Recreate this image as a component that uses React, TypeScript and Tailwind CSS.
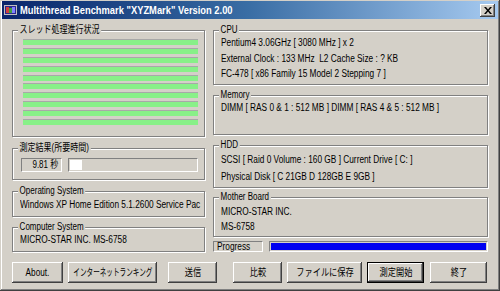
import React from "react";

const FONT = { fontFamily: '"Liberation Sans", "Noto Sans CJK JP", sans-serif' };

function T({ children, className = "" }: { children: React.ReactNode; className?: string }) {
  return (
    <span className={`inline-block origin-left scale-x-[0.83] whitespace-nowrap ${className}`}>
      {children}
    </span>
  );
}

function Group({
  label,
  className,
  children,
}: {
  label: string;
  className: string;
  children?: React.ReactNode;
}) {
  return (
    <div
      className={`relative border border-[#808080] shadow-[inset_1px_1px_0_#ffffff,1px_1px_0_#ffffff] ${className}`}
    >
      <span className="absolute -top-[7px] left-[5px] origin-left scale-x-[0.8] px-[2px] bg-[#d4d0c8] text-[10px] leading-[12px] whitespace-nowrap">
        {label}
      </span>
      {children}
    </div>
  );
}

function Btn({
  label,
  className,
  def,
  narrow,
}: {
  label: string;
  className: string;
  def?: boolean;
  narrow?: boolean;
}) {
  return (
    <div
      className={`h-[21px] flex items-center justify-center text-[10px] ${
        def
          ? "border border-black shadow-[inset_-1px_-1px_0_#404040,inset_1px_1px_0_#ffffff,inset_-2px_-2px_0_#808080]"
          : "shadow-[inset_-1px_-1px_0_#404040,inset_1px_1px_0_#ffffff,inset_-2px_-2px_0_#808080]"
      } ${className}`}
    >
      <span
        className={`inline-block whitespace-nowrap ${narrow ? "scale-x-[0.66]" : "scale-x-[0.82]"}`}
      >
        {label}
      </span>
    </div>
  );
}

export default function App() {
  const bars = Array.from({ length: 10 });
  return (
    <div
      className="w-[500px] h-[291px] bg-[#d4d0c8] text-black overflow-hidden flex flex-col shadow-[inset_-1px_-1px_0_#404040,inset_1px_1px_0_#d4d0c8,inset_-2px_-2px_0_#808080,inset_2px_2px_0_#ffffff]"
      style={FONT}
    >
      {/* Title bar */}
      <div className="h-[18px] mx-[2px] mt-[1px] bg-gradient-to-r from-[#0a246a] via-[#3a6ea5] to-[#a6caf0] flex items-center">
        <svg width="13" height="10" viewBox="0 0 13 10" className="ml-[2px] mr-[3px]">
          <rect x="0" y="0" width="13" height="10" fill="#c0c0c0" />
          <rect x="1" y="1" width="11" height="8" fill="#2a2a8a" />
          <rect x="2" y="2" width="3" height="6" fill="#d04040" />
          <rect x="5" y="3" width="3" height="5" fill="#40a040" />
          <rect x="8" y="2" width="3" height="6" fill="#8080ff" />
        </svg>
        <span className="text-white font-bold text-[11px] inline-block origin-left scale-x-[0.85] whitespace-nowrap">
          Multithread Benchmark "XYZMark" Version 2.00
        </span>
        <div className="ml-auto mr-[3px] w-[15px] h-[13px] bg-[#d4d0c8] shadow-[inset_-1px_-1px_0_#404040,inset_1px_1px_0_#ffffff,inset_-2px_-2px_0_#808080] flex items-center justify-center">
          <svg width="8" height="7" viewBox="0 0 8 7">
            <path d="M0 0h2l2 2.5L6 0h2L5 3.5 8 7H6L4 4.5 2 7H0l3-3.5z" fill="#000" />
          </svg>
        </div>
      </div>

      {/* Main */}
      <div className="flex px-[12px] pt-[11px] gap-[8px]">
        {/* Left column */}
        <div className="w-[193px] flex flex-col">
          <Group label="スレッド処理進行状況" className="h-[107px] pt-[8px] pl-[10px] pr-[6px]">
            <div className="h-[86px] flex flex-col justify-between">
              {bars.map((_, i) => (
                <div key={i} className="h-[6px] border-t border-[#a8a8a8] bg-[#88f088]" />
              ))}
            </div>
          </Group>
          <Group label="測定結果(所要時間)" className="h-[32px] mt-[11px] pt-[9px] pl-[8px] pr-[6px]">
            <div className="flex gap-[6px]">
              <div className="w-[41px] h-[14px] border-t border-l border-[#808080] border-b border-r border-b-white border-r-white flex items-center justify-end pr-[3px] text-[10px] leading-[12px]">
                <span className="inline-block origin-right scale-x-[0.8] whitespace-nowrap">9.81 秒</span>
              </div>
              <div className="flex-1 h-[14px] border-t border-l border-[#808080] border-b border-r border-b-white border-r-white flex items-center pl-[1px]">
                <div className="w-[12px] h-[10px] bg-white" />
              </div>
            </div>
          </Group>
          <Group label="Operating System" className="h-[26px] mt-[11px] pt-[5px] pl-[7px]">
            <div className="text-[10px] leading-[15px]">
              <T>Windows XP Home Edition 5.1.2600 Service Pac</T>
            </div>
          </Group>
          <Group label="Computer System" className="h-[25px] mt-[10px] pt-[4px] pl-[7px]">
            <div className="text-[10px] leading-[15px]">
              <T>MICRO-STAR INC. MS-6758</T>
            </div>
          </Group>
        </div>

        {/* Right column */}
        <div className="w-[275px] flex flex-col">
          <Group label="CPU" className="h-[55px] pt-[4px] pl-[7px]">
            <div className="text-[10px] leading-[15.5px] flex flex-col">
              <T>Pentium4 3.06GHz [ 3080 MHz ] x 2</T>
              <T>External Clock : 133 MHz&nbsp; L2 Cache Size : ? KB</T>
              <T>FC-478 [ x86 Family 15 Model 2 Stepping 7 ]</T>
            </div>
          </Group>
          <Group label="Memory" className="h-[40px] mt-[10px] pt-[4px] pl-[7px]">
            <div className="text-[10px] leading-[15px]">
              <T>DIMM [ RAS 0 &amp; 1 : 512 MB ] DIMM [ RAS 4 &amp; 5 : 512 MB ]</T>
            </div>
          </Group>
          <Group label="HDD" className="h-[43px] mt-[10px] pt-[5px] pl-[7px]">
            <div className="text-[10px] leading-[17px] flex flex-col">
              <T>SCSI [ Raid 0 Volume : 160 GB ] Current Drive [ C: ]</T>
              <T>Physical Disk [ C 21GB D 128GB E 9GB ]</T>
            </div>
          </Group>
          <Group label="Mother Board" className="h-[40px] mt-[9px] pt-[6px] pl-[7px]">
            <div className="text-[10px] leading-[15px] flex flex-col">
              <T>MICRO-STAR INC.</T>
              <T>MS-6758</T>
            </div>
          </Group>
          <div className="flex h-[11px] mt-[4px] gap-[6px]">
            <div className="w-[50px] border-t border-l border-[#808080] border-b border-r border-b-white border-r-white flex items-center pl-[3px] text-[10px] leading-[10px]">
              <T>Progress</T>
            </div>
            <div className="flex-1 border-t border-l border-[#808080] border-b border-r border-b-white border-r-white p-[1px]">
              <div className="h-full bg-[#0000f0]" />
            </div>
          </div>
        </div>
      </div>

      {/* Buttons */}
      <div className="flex px-[12px] mt-[10px]">
        <Btn label="About." className="w-[51px]" />
        <Btn label="インターネットランキング" className="w-[89px] ml-[5px]" narrow />
        <Btn label="送信" className="w-[49px] ml-[11px]" />
        <Btn label="比較" className="w-[49px] ml-[16px]" />
        <Btn label="ファイルに保存" className="w-[75px] ml-[5px]" />
        <Btn label="測定開始" className="w-[57px] ml-[5px]" def />
        <Btn label="終了" className="w-[57px] ml-[6px]" />
      </div>
    </div>
  );
}
